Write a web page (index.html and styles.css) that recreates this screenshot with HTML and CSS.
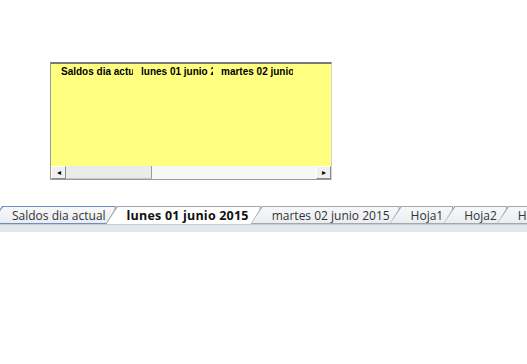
FILE: index.html
```html
<!DOCTYPE html>
<html lang="es">
<head>
	<meta charset="UTF-8">
	<meta name="viewport" content="width=device-width, initial-scale=1.0">
	<title>Saldos</title>
	<link rel="stylesheet" href="styles.css">
</head>
<body>
	<div class="sheet">
		<div class="chart">
			<div class="chart-head">
				<span class="col">Saldos dia actual</span>
				<span class="col">lunes 01 junio 2015</span>
				<span class="col">martes 02 junio 2015</span>
			</div>
			<div class="hscroll">
				<span class="sbtn">&#9666;</span>
				<span class="thumb"></span>
				<span class="track"></span>
				<span class="sbtn">&#9656;</span>
			</div>
		</div>
	</div>
	<div class="tabbar">
		<div class="tab"><span>Saldos dia actual</span></div>
		<div class="tab active"><span>lunes 01 junio 2015</span></div>
		<div class="tab"><span>martes 02 junio 2015</span></div>
		<div class="tab"><span>Hoja1</span></div>
		<div class="tab"><span>Hoja2</span></div>
		<div class="tab"><span>Hoja3</span></div>
	</div>
	<div class="band"></div>
</body>
</html>
```

FILE: styles.css
```css
body {
	margin: 0px;
	background: #fff;
	overflow: hidden;
}

.sheet {
	padding: 62px 0 0 50px;
	height: 144px;
}

.chart {
	width: 280px;
	height: 116px;
	display: flex;
	flex-direction: column;
	background-color: #ffff80;
	border-top: 2px solid #7a7a7a;
	border-left: 1px solid #9a9a9a;
	border-right: 1px solid #d4d4d4;
}

.chart-head {
	flex: 1;
	display: flex;
	gap: 8px;
	padding: 2px 0 0 10px;
	font-family: "Liberation Sans", Arial, sans-serif;
	font-weight: bold;
	font-size: 10px;
	color: #000;
}

.col {
	width: 72px;
	height: 13px;
	white-space: nowrap;
	overflow: hidden;
}

.hscroll {
	height: 13px;
	display: flex;
	background-color: #f4f4f4;
	border-bottom: 1px solid #9a9a9a;
}

.sbtn {
	width: 13px;
	display: flex;
	align-items: center;
	justify-content: center;
	font-size: 8px;
	color: #000;
	background-color: #f0f0f0;
	border: 1px solid #8c8c8c;
	border-top-color: #fff;
	border-left-color: #fff;
}

.thumb {
	width: 85px;
	background-color: #ebebeb;
	border-right: 1px solid #9a9a9a;
	border-bottom: 1px solid #c8c8c8;
}

.track {
	flex: 1;
	background-color: #f7f7f7;
}

.tabbar {
	display: flex;
	margin-left: -9px;
	height: 18px;
	white-space: nowrap;
	font-family: "Open Sans", sans-serif;
	font-size: 12px;
	color: #333;
}

.tab {
	position: relative;
	display: flex;
	align-items: center;
	flex-shrink: 0;
	height: 18px;
	padding: 0 10px 0 21px;
	margin-right: -10px;
}

.tab::before,
.tab::after {
	content: "";
	position: absolute;
	clip-path: polygon(0 100%, 11px 0, 100% 0, 100% 100%);
}

.tab::before {
	inset: 0;
	background-color: #a3a8ae;
}

.tab::after {
	inset: 1px 1px 1px 1px;
	background: linear-gradient(#f7f8fa, #eaedf0);
}

.tab span {
	position: relative;
	z-index: 1;
}

.tab:first-child::before {
	background-color: #6d8fc0;
}

.tab.active {
	font-weight: bold;
	font-size: 12.5px;
	letter-spacing: 0.2px;
	color: #111;
	padding-right: 12px;
}

.tab.active::after {
	bottom: 0;
	background: #fff;
}

.band {
	height: 7px;
	background-color: #e4e7eb;
	border-top: 1px solid #c9cdd2;
}
```
